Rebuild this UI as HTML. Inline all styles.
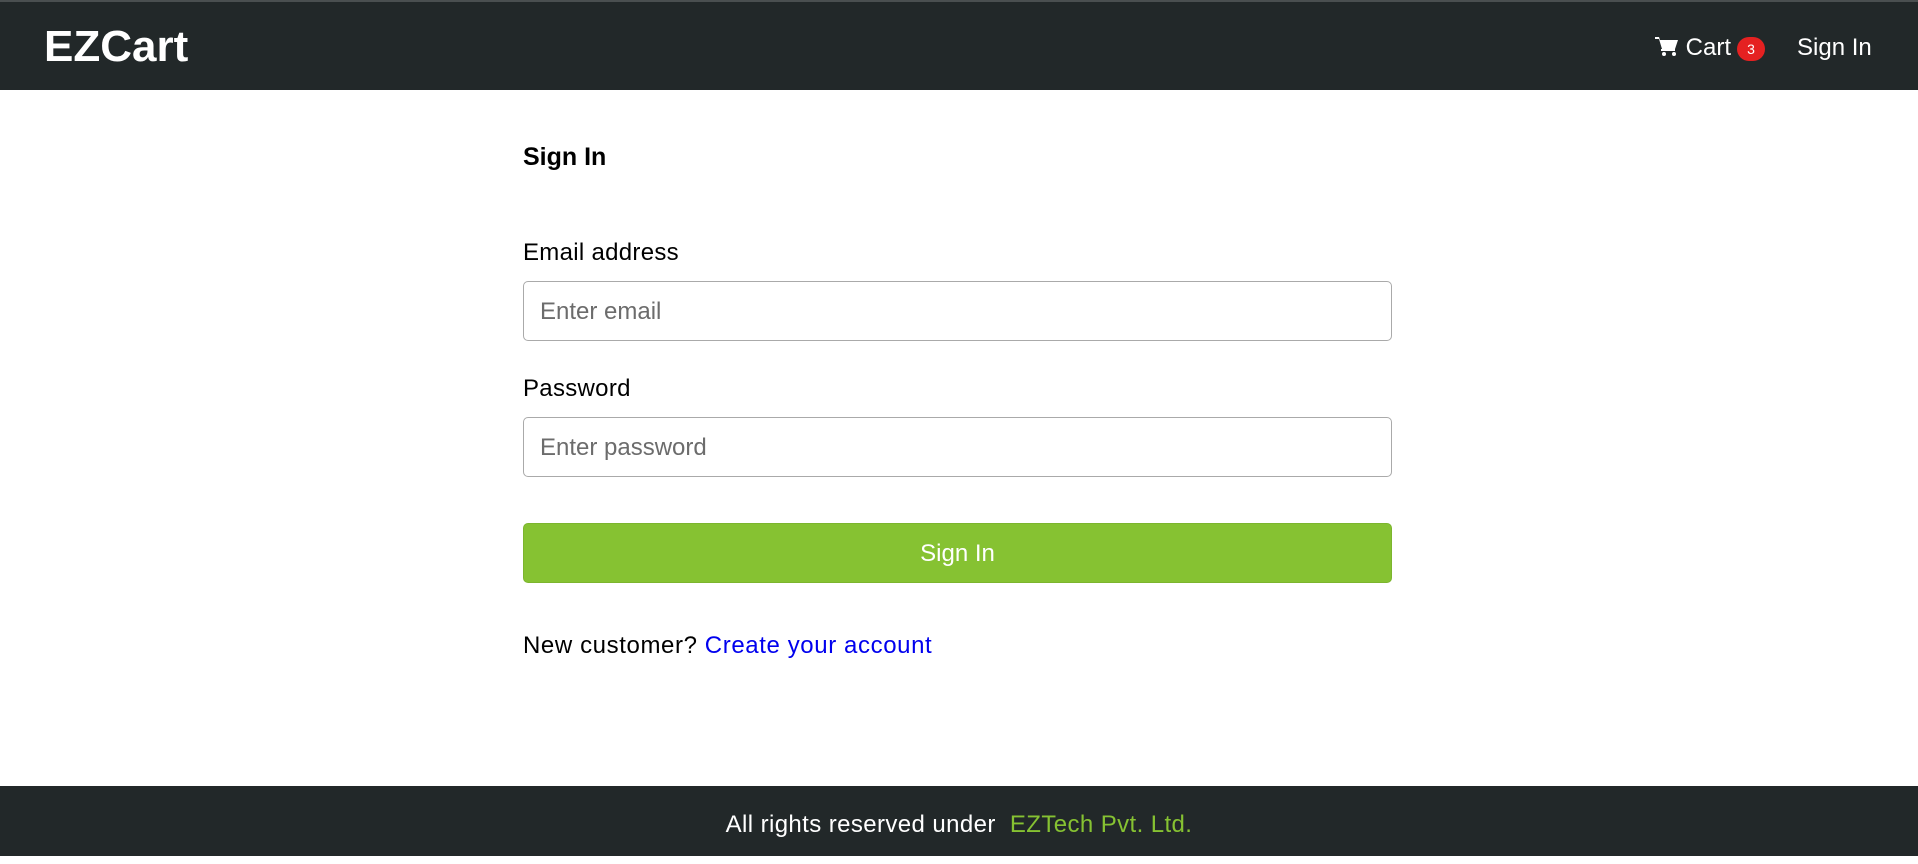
<!DOCTYPE html>
<html><head><style>
*{box-sizing:border-box;margin:0;padding:0}
body{width:1918px;height:856px;position:relative;background:#fff;font-family:"Liberation Sans",sans-serif;overflow:hidden}
.hdr{position:absolute;left:0;top:0;width:1918px;height:90px;background:#222829;border-top:2px solid #4a4f50}
.logo{position:absolute;left:44px;top:20px;color:#fff;font-size:44px;font-weight:bold;letter-spacing:0}
.nav{position:absolute;top:32px;color:#fff;font-size:24px}
.badge{display:inline-block;background:#e52121;color:#fff;font-size:14px;width:28px;height:24px;border-radius:12px;text-align:center;line-height:24px;vertical-align:middle;margin-left:6px}
.t{position:absolute;left:523px;color:#000}
.inp{position:absolute;left:523px;width:869px;height:60px;border:1px solid #aaa;border-radius:5px;font-size:24px;color:#6c6c6c;padding-left:16px;line-height:60px}
.btn{position:absolute;left:523px;top:523px;width:869px;height:60px;background:#86c232;border:1px solid #7cb52e;border-radius:5px;color:#fff;font-size:24px;text-align:center;line-height:60px}
.ftr{position:absolute;left:0;top:786px;width:1918px;height:70px;background:#222829;color:#fff;font-size:24px;text-align:center;line-height:78px;letter-spacing:0.4px}
</style></head><body>
<div class="hdr">
<div class="logo">EZCart</div>
<div class="nav" style="left:1655px"><svg width="24" height="22" viewBox="0 0 24 22" style="vertical-align:-2px"><path d="M0 2h4l1 3h18l-3 9H7L4 4H0z" fill="#fff"/><path d="M6 14h14v2H6z" fill="#fff"/><circle cx="9" cy="19" r="2" fill="#fff"/><circle cx="19" cy="19" r="2" fill="#fff"/></svg> Cart<span class="badge">3</span></div>
<div class="nav" style="left:1797px">Sign In</div>
</div>
<div class="t" style="top:143px;font-size:25px;font-weight:bold">Sign In</div>
<div class="t" style="top:239px;font-size:24px;letter-spacing:0.3px">Email address</div>
<div class="inp" style="top:281px">Enter email</div>
<div class="t" style="top:375px;font-size:24px;letter-spacing:0.3px">Password</div>
<div class="inp" style="top:417px">Enter password</div>
<div class="btn">Sign In</div>
<div class="t" style="top:632px;font-size:24px;letter-spacing:0.6px">New customer? <span style="color:#0000ee">Create your account</span></div>
<div class="ftr">All rights reserved under &nbsp;<span style="color:#86c232">EZTech Pvt. Ltd.</span></div>
</body></html>
